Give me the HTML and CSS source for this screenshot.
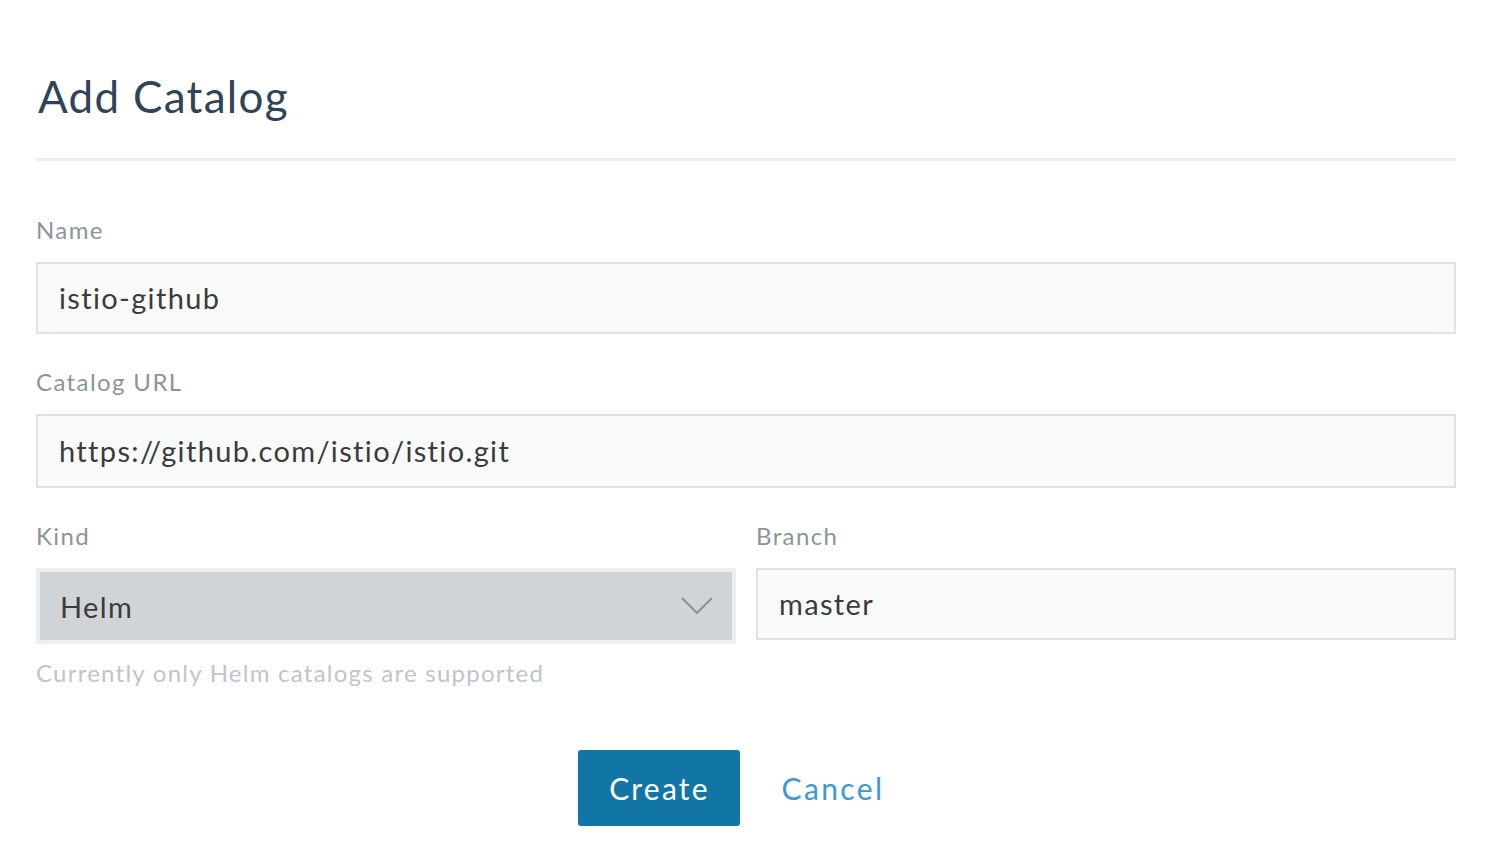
FILE: index.html
```html
<!DOCTYPE html>
<html>
<head>
<meta charset="utf-8">
<link rel="stylesheet" href="styles.css">
</head>
<body>
<div class="page">
  <h1 class="title">Add Catalog</h1>
  <div class="divider"></div>
  <div class="field">
    <label class="label">Name</label>
    <div class="input">istio-github</div>
  </div>
  <div class="field">
    <label class="label">Catalog URL</label>
    <div class="input input-url">https://github.com/istio/istio.git</div>
  </div>
  <div class="row">
    <div class="col">
      <label class="label">Kind</label>
      <div class="select">
        <span>Helm</span>
        <svg class="chev" width="32" height="17" viewBox="0 0 32 17"><path d="M1 1 L16 16 L31 1" fill="none" stroke="#8a9298" stroke-width="2"/></svg>
      </div>
      <div class="help">Currently only Helm catalogs are supported</div>
    </div>
    <div class="col">
      <label class="label">Branch</label>
      <div class="input">master</div>
    </div>
  </div>
  <div class="actions">
    <button class="btn">Create</button>
    <a class="cancel">Cancel</a>
  </div>
</div>
</body>
</html>
```
FILE: styles.css
```css
html, body { margin: 0; padding: 0; background: #fff; }
body { font-family: Lato, "Open Sans", sans-serif; }
.page { padding: 0 38px 0 36px; }
.title {
  margin: 0;
  padding-top: 68px;
  font-size: 44px;
  line-height: 56px;
  font-weight: 400;
  letter-spacing: 1.3px;
  color: #2f4458;
  padding-left: 2px;
  height: 90px;
  box-sizing: content-box;
}
.divider { height: 3px; background: #eceff1; }
.field { margin-top: 54px; }
.field + .field { margin-top: 33px; }
.label {
  display: block;
  font-size: 24px;
  line-height: 30px;
  letter-spacing: 1.4px;
  color: #8b959c;
  margin-bottom: 17px;
}
.input {
  box-sizing: border-box;
  height: 72px;
  border: 2px solid #dde3e6;
  background: #f8fafa;
  font-size: 29px;
  line-height: 68px;
  letter-spacing: 1.35px;
  color: #3b3b3b;
  padding-left: 21px;
}
.input-url { height: 74px; line-height: 70px; }
.row { display: flex; gap: 20px; margin-top: 33px; }
.col { flex: 1; }
.select {
  box-sizing: border-box;
  height: 76px;
  border: 4px solid #eceff0;
  background: #d0d4d7;
  display: flex;
  align-items: center;
  justify-content: space-between;
  padding: 0 19px 0 20px;
  font-size: 29px;
  letter-spacing: 1.35px;
  color: #3b3b3b;
}
.chev { display: block; margin-top: -2px; }
.help {
  font-size: 24px;
  line-height: 30px;
  letter-spacing: 1.25px;
  color: #bfc5ca;
  margin-top: 14px;
}
.actions {
  display: flex;
  justify-content: center;
  align-items: center;
  gap: 41px;
  margin-top: 62px;
}
.btn {
  box-sizing: border-box;
  width: 162px;
  height: 76px;
  border: none;
  border-radius: 3px;
  background: #1176a6;
  color: #fff;
  font-family: inherit;
  font-size: 30px;
  letter-spacing: 2.2px;
  padding: 0;
}
.cancel {
  font-size: 30px;
  letter-spacing: 2.4px;
  color: #3d98d3;
  margin-right: 29px;
}
```
